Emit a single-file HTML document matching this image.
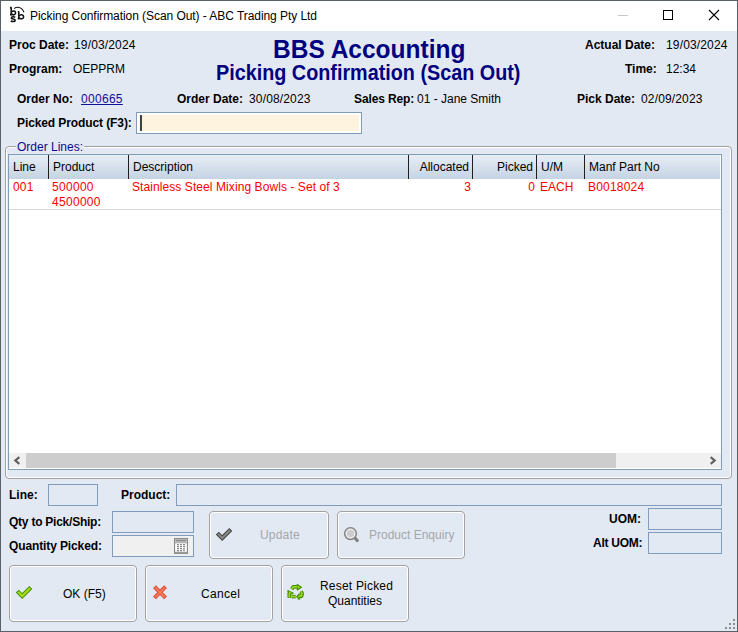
<!DOCTYPE html>
<html><head><meta charset="utf-8">
<style>
html,body{margin:0;padding:0;}
body{width:738px;height:632px;position:relative;overflow:hidden;background:#596066;font-family:"Liberation Sans",sans-serif;font-size:12px;color:#000;}
.a{position:absolute;white-space:nowrap;line-height:14px;}
.b{font-weight:bold;}
#win{position:absolute;left:1px;top:1px;width:736px;height:630px;background:#e3e9f3;}
#title{position:absolute;left:1px;top:1px;width:736px;height:30px;background:#fff;}
.box{position:absolute;box-sizing:border-box;border:1px solid #7f9cbc;}
.btn{position:absolute;box-sizing:border-box;border:1px solid #a3a3a3;border-radius:4px;box-shadow:inset 0 0 0 1px #fff;}
.red{color:#ff0000;}
</style></head><body>
<div id="win"></div>
<div id="title"></div>
<!-- title bar -->
<div class="a" style="left:30px;top:9px;color:#000;letter-spacing:-0.06px;">Picking Confirmation (Scan Out) - ABC Trading Pty Ltd</div>
<div style="position:absolute;left:618px;top:15px;width:10px;height:1px;background:#c8c8c8;"></div>
<div style="position:absolute;left:663px;top:10px;width:10px;height:10px;box-sizing:border-box;border:1px solid #000;"></div>
<svg style="position:absolute;left:708px;top:9px;" width="12" height="12" viewBox="0 0 12 12"><path d="M1 1L11 11M11 1L1 11" stroke="#000" stroke-width="1.1"/></svg>

<!-- header labels -->
<div class="a b" style="left:9px;top:38px;">Proc Date:</div>
<div class="a" style="left:74px;top:38px;letter-spacing:0.15px;">19/03/2024</div>
<div class="a b" style="left:9px;top:62px;">Program:</div>
<div class="a" style="left:73px;top:62px;">OEPPRM</div>

<div class="a b" style="left:273px;top:36px;font-size:24.5px;line-height:28px;color:#000080;transform:scaleY(1.045);transform-origin:0 22px;">BBS Accounting</div>
<div class="a b" style="left:216px;top:60.5px;font-size:19.8px;line-height:24px;color:#000080;transform:scaleY(1.09);transform-origin:0 19px;">Picking Confirmation (Scan Out)</div>

<div class="a b" style="left:585px;top:38px;">Actual Date:</div>
<div class="a" style="left:666px;top:38px;letter-spacing:0.15px;">19/03/2024</div>
<div class="a b" style="left:625px;top:62px;">Time:</div>
<div class="a" style="left:666px;top:62px;">12:34</div>

<div class="a b" style="left:17px;top:92px;">Order No:</div>
<div class="a" style="left:81px;top:92px;color:#10109a;text-decoration:underline;letter-spacing:0.3px;">000665</div>
<div class="a b" style="left:177px;top:92px;">Order Date:</div>
<div class="a" style="left:249px;top:92px;letter-spacing:0.15px;">30/08/2023</div>
<div class="a b" style="left:354px;top:92px;letter-spacing:-0.12px;">Sales Rep:</div>
<div class="a" style="left:417px;top:92px;">01 - Jane Smith</div>
<div class="a b" style="left:577px;top:92px;">Pick Date:</div>
<div class="a" style="left:641px;top:92px;letter-spacing:0.15px;">02/09/2023</div>

<div class="a b" style="left:17px;top:116px;letter-spacing:-0.1px;">Picked Product (F3):</div>
<div class="box" style="left:136px;top:112px;width:226px;height:22px;background:#fef3de;border-color:#7f9db9;box-shadow:inset 0 0 0 2px #fff;"></div>
<div style="position:absolute;left:140px;top:115px;width:2px;height:16px;background:#1a2030;opacity:0.85;"></div>

<!-- group box -->
<div style="position:absolute;left:5px;top:146px;width:727px;height:333px;box-sizing:border-box;border:1px solid #a0a0a0;border-radius:4px;box-shadow:inset 0 0 0 1px #fff;"></div>
<div class="a" style="left:16px;top:140px;padding:0 1px;background:#e3e9f3;color:#0c0c8c;">Order Lines:</div>

<!-- grid -->
<div class="box" style="left:8px;top:154px;width:714px;height:316px;background:#fff;border-color:#7f9db9;"></div>
<div style="position:absolute;left:9px;top:155px;width:711px;height:24px;background:linear-gradient(#e8eef6,#c5d3e3);"></div>

<!-- grid header cols -->
<div style="position:absolute;left:48px;top:155px;width:1px;height:24px;background:#1e1e1e;"></div>
<div style="position:absolute;left:128px;top:155px;width:1px;height:24px;background:#1e1e1e;"></div>
<div style="position:absolute;left:408px;top:155px;width:1px;height:24px;background:#1e1e1e;"></div>
<div style="position:absolute;left:472px;top:155px;width:1px;height:24px;background:#1e1e1e;"></div>
<div style="position:absolute;left:536px;top:155px;width:1px;height:24px;background:#1e1e1e;"></div>
<div style="position:absolute;left:584px;top:155px;width:1px;height:24px;background:#1e1e1e;"></div>
<div class="a" style="left:13px;top:160px;">Line</div>
<div class="a" style="left:53px;top:160px;">Product</div>
<div class="a" style="left:133px;top:160px;">Description</div>
<div class="a" style="left:409px;top:160px;width:60px;text-align:right;">Allocated</div>
<div class="a" style="left:473px;top:160px;width:60px;text-align:right;">Picked</div>
<div class="a" style="left:541px;top:160px;">U/M</div>
<div class="a" style="left:589px;top:160px;">Manf Part No</div>
<!-- row -->
<div class="a red" style="left:13px;top:180px;letter-spacing:0.2px;">001</div>
<div class="a red" style="left:52px;top:180px;letter-spacing:0.3px;">500000</div>
<div class="a red" style="left:52px;top:195px;letter-spacing:0.3px;">4500000</div>
<div class="a red" style="left:132px;top:180px;letter-spacing:0.08px;">Stainless Steel Mixing Bowls - Set of 3</div>
<div class="a red" style="left:411px;top:180px;width:60px;text-align:right;">3</div>
<div class="a red" style="left:475px;top:180px;width:60px;text-align:right;">0</div>
<div class="a red" style="left:540px;top:180px;">EACH</div>
<div class="a red" style="left:588px;top:180px;letter-spacing:0.2px;">B0018024</div>
<div style="position:absolute;left:9px;top:209px;width:712px;height:1px;background:#d8d8d8;"></div>
<!-- scrollbar -->
<div style="position:absolute;left:9px;top:453px;width:712px;height:15px;background:#f0f0f0;"></div>
<div style="position:absolute;left:26px;top:453px;width:590px;height:15px;background:#cdcdcd;"></div>
<svg style="position:absolute;left:13px;top:455px;" width="8" height="11" viewBox="0 0 8 11"><path d="M6.3 2.2L2.4 5.5L6.3 8.8" fill="none" stroke="#606060" stroke-width="2.2"/></svg>
<svg style="position:absolute;left:709px;top:455px;" width="8" height="11" viewBox="0 0 8 11"><path d="M1.7 2.2L5.6 5.5L1.7 8.8" fill="none" stroke="#606060" stroke-width="2.2"/></svg>

<!-- bottom fields -->
<div class="a b" style="left:9px;top:488px;">Line:</div>
<div class="box" style="left:48px;top:484px;width:50px;height:22px;"></div>
<div class="a b" style="left:121px;top:488px;">Product:</div>
<div class="box" style="left:176px;top:484px;width:546px;height:22px;"></div>
<div class="a b" style="left:9px;top:515px;letter-spacing:-0.24px;">Qty to Pick/Ship:</div>
<div class="box" style="left:112px;top:511px;width:82px;height:22px;"></div>
<div class="a b" style="left:9px;top:539px;letter-spacing:-0.12px;">Quantity Picked:</div>
<div class="box" style="left:112px;top:535px;width:82px;height:22px;background:#f0f0f0;"></div>
<div class="a b" style="left:609px;top:512px;">UOM:</div>
<div class="box" style="left:648px;top:508px;width:74px;height:22px;"></div>
<div class="a b" style="left:593px;top:536px;letter-spacing:-0.25px;">Alt UOM:</div>
<div class="box" style="left:648px;top:532px;width:74px;height:22px;"></div>

<!-- buttons -->
<div class="btn" style="left:209px;top:511px;width:120px;height:48px;"></div>
<div class="a" style="left:260px;top:528px;color:#a4a6ac;letter-spacing:0.2px;">Update</div>
<div class="btn" style="left:337px;top:511px;width:128px;height:48px;"></div>
<div class="a" style="left:369px;top:528px;color:#a4a6ac;">Product Enquiry</div>
<div class="btn" style="left:9px;top:565px;width:128px;height:57px;"></div>
<div class="a" style="left:63px;top:587px;">OK (F5)</div>
<div class="btn" style="left:145px;top:565px;width:128px;height:57px;"></div>
<div class="a" style="left:201px;top:587px;letter-spacing:0.3px;">Cancel</div>
<div class="btn" style="left:281px;top:565px;width:128px;height:57px;"></div>
<div class="a" style="left:320px;top:579px;letter-spacing:0.2px;">Reset Picked</div>
<div class="a" style="left:328px;top:594px;">Quantities</div>

<!-- icons -->
<svg style="position:absolute;left:0;top:0;" width="30" height="30" viewBox="0 0 30 30">
<g fill="none" stroke="#111" stroke-width="1.55">
<path d="M11.2 7.2V14.6M10 7.6H11.4M10 14.6H12"/>
<path d="M11.4 12.2C12 11 13.3 10.8 14.4 11.1C15.7 11.5 15.9 13.8 14.8 14.4C13.6 15.1 12 14.6 11.4 13.8"/>
<path d="M15.2 17.4C14.3 16.6 11.4 16.4 11.3 18C11.2 19.4 15.3 18.8 15.2 20.4C15.1 22 11.7 21.8 10.8 20.9"/>
<path d="M18.8 11.4V18.6M17.8 11.8H19M17.8 18.6H19.6"/>
<path d="M19 16C19.6 14.8 21 14.6 22.4 14.9C23.8 15.3 24 17.6 22.8 18.3C21.6 19 19.8 18.6 19 17.8"/>
<path d="M14.2 8.6C16.5 6.6 21.8 6.4 24 12.4" stroke-width="1.1"/>
</g></svg>
<svg style="position:absolute;left:12px;top:580px;" width="24" height="24" viewBox="0 0 24 24">
<path d="M6.8 12.6L10.2 16.1L17.3 9" fill="none" stroke="#3c8c00" stroke-width="4.2" stroke-linecap="square" stroke-linejoin="miter"/>
<path d="M6.8 12.6L10.2 16.1L17.3 9" fill="none" stroke="#a6dc12" stroke-width="2.3" stroke-linecap="square"/>
</svg>
<svg style="position:absolute;left:212px;top:522px;" width="24" height="24" viewBox="0 0 24 24">
<path d="M6.8 12.6L10.2 16.1L17.3 9" fill="none" stroke="#3e3e3e" stroke-width="4.2" stroke-linecap="square"/>
<path d="M6.8 12.6L10.2 16.1L17.3 9" fill="none" stroke="#858585" stroke-width="2.3" stroke-linecap="square"/>
</svg>
<svg style="position:absolute;left:148px;top:580px;" width="24" height="24" viewBox="0 0 24 24">
<path d="M7.9 8.2L16.1 16.4M16.1 8.2L7.9 16.4" fill="none" stroke="#df4a2e" stroke-width="4" stroke-linecap="square"/>
<path d="M7.9 8.2L16.1 16.4M16.1 8.2L7.9 16.4" fill="none" stroke="#f17a60" stroke-width="2.1" stroke-linecap="square"/>
</svg>
<svg style="position:absolute;left:284px;top:580px;" width="24" height="24" viewBox="0 0 24 24">
<g stroke="#3f8f00" stroke-width="3.6" fill="none" stroke-linejoin="round">
<path d="M7.8 9.2L9.2 6.9L13.6 6.7"/>
<path d="M5.2 13.2L5.4 17.8"/>
<path d="M7.6 16.6L11.6 16.6"/>
<path d="M17.2 11.2L18.2 13.6L17.6 16.2L15 16.6"/>
</g>
<g fill="#3f8f00" stroke="#3f8f00" stroke-width="0.9" stroke-linejoin="round">
<path d="M13.2 4.2L17.8 7.3L13.2 10.2Z"/>
<path d="M3.8 10.4L9.4 13.2L4.4 15.2Z"/>
<path d="M12.4 16.6L15.2 13.6L15.2 19.8Z"/>
</g>
<g stroke="#a4da18" stroke-width="1.6" fill="none" stroke-linejoin="round">
<path d="M7.8 9.2L9.2 6.9L13.6 6.7"/>
<path d="M5.2 13.2L5.4 17.4"/>
<path d="M7.8 16.6L11.4 16.6"/>
<path d="M17.2 11.4L18 13.6L17.4 15.9L15 16.4"/>
</g>
<g fill="#a4da18">
<path d="M14 5.8L16.4 7.3L14 8.8Z"/>
<path d="M5 11.4L7.8 13L5.3 13.9Z"/>
<path d="M13.6 16.6L14.6 15.2L14.6 18.2Z"/>
</g>
</svg>
<svg style="position:absolute;left:340px;top:522px;" width="24" height="24" viewBox="0 0 24 24">
<path d="M15.4 16.4L17.2 18.6" stroke="#808080" stroke-width="3.2" stroke-linecap="round"/>
<circle cx="10.5" cy="11.6" r="5.8" fill="#d2d2d2" stroke="#858585" stroke-width="1.6"/>
<circle cx="10.5" cy="11.6" r="4.3" fill="#cccccc" stroke="#f4f4f4" stroke-width="1.1"/>
</svg>
<svg style="position:absolute;left:174px;top:538px;" width="14" height="16" viewBox="0 0 14 16">
<rect x="0.5" y="0.5" width="13" height="15" fill="#e8e8e8" stroke="#8a8a8a" stroke-width="1"/>
<rect x="1" y="1" width="12" height="3.6" fill="#bdbdbd"/>
<rect x="2" y="1.9" width="10" height="1.3" fill="#8a8a8a"/>
<rect x="1" y="4.6" width="12" height="0.8" fill="#8a8a8a"/>
<rect x="1.5" y="5.4" width="11" height="8.4" fill="#fff"/>
<rect x="1" y="13.8" width="12" height="1.7" fill="#9a9a9a"/>
<g fill="#6a6a6a">
<rect x="3" y="6.2" width="2" height="1"/><rect x="6" y="6.2" width="2" height="1"/><rect x="9" y="6.2" width="2" height="1"/>
<rect x="3" y="8.2" width="2" height="1"/><rect x="6" y="8.2" width="2" height="1"/><rect x="9" y="8.2" width="2" height="1"/>
<rect x="3" y="10.2" width="2" height="1"/><rect x="6" y="10.2" width="2" height="1"/>
<rect x="3" y="12.2" width="2" height="1"/><rect x="6" y="12.2" width="2" height="1"/>
<rect x="9.2" y="10" width="1.6" height="3.2" fill="#9a9a9a"/>
</g>
</svg>
<!-- resize grip -->
<div style="position:absolute;left:733px;top:619px;width:2px;height:2px;background:#8e8e8e;"></div>
<div style="position:absolute;left:729px;top:623px;width:2px;height:2px;background:#8e8e8e;"></div>
<div style="position:absolute;left:733px;top:623px;width:2px;height:2px;background:#8e8e8e;"></div>
<div style="position:absolute;left:725px;top:627px;width:2px;height:2px;background:#8e8e8e;"></div>
<div style="position:absolute;left:729px;top:627px;width:2px;height:2px;background:#8e8e8e;"></div>
<div style="position:absolute;left:733px;top:627px;width:2px;height:2px;background:#8e8e8e;"></div>
</body></html>
